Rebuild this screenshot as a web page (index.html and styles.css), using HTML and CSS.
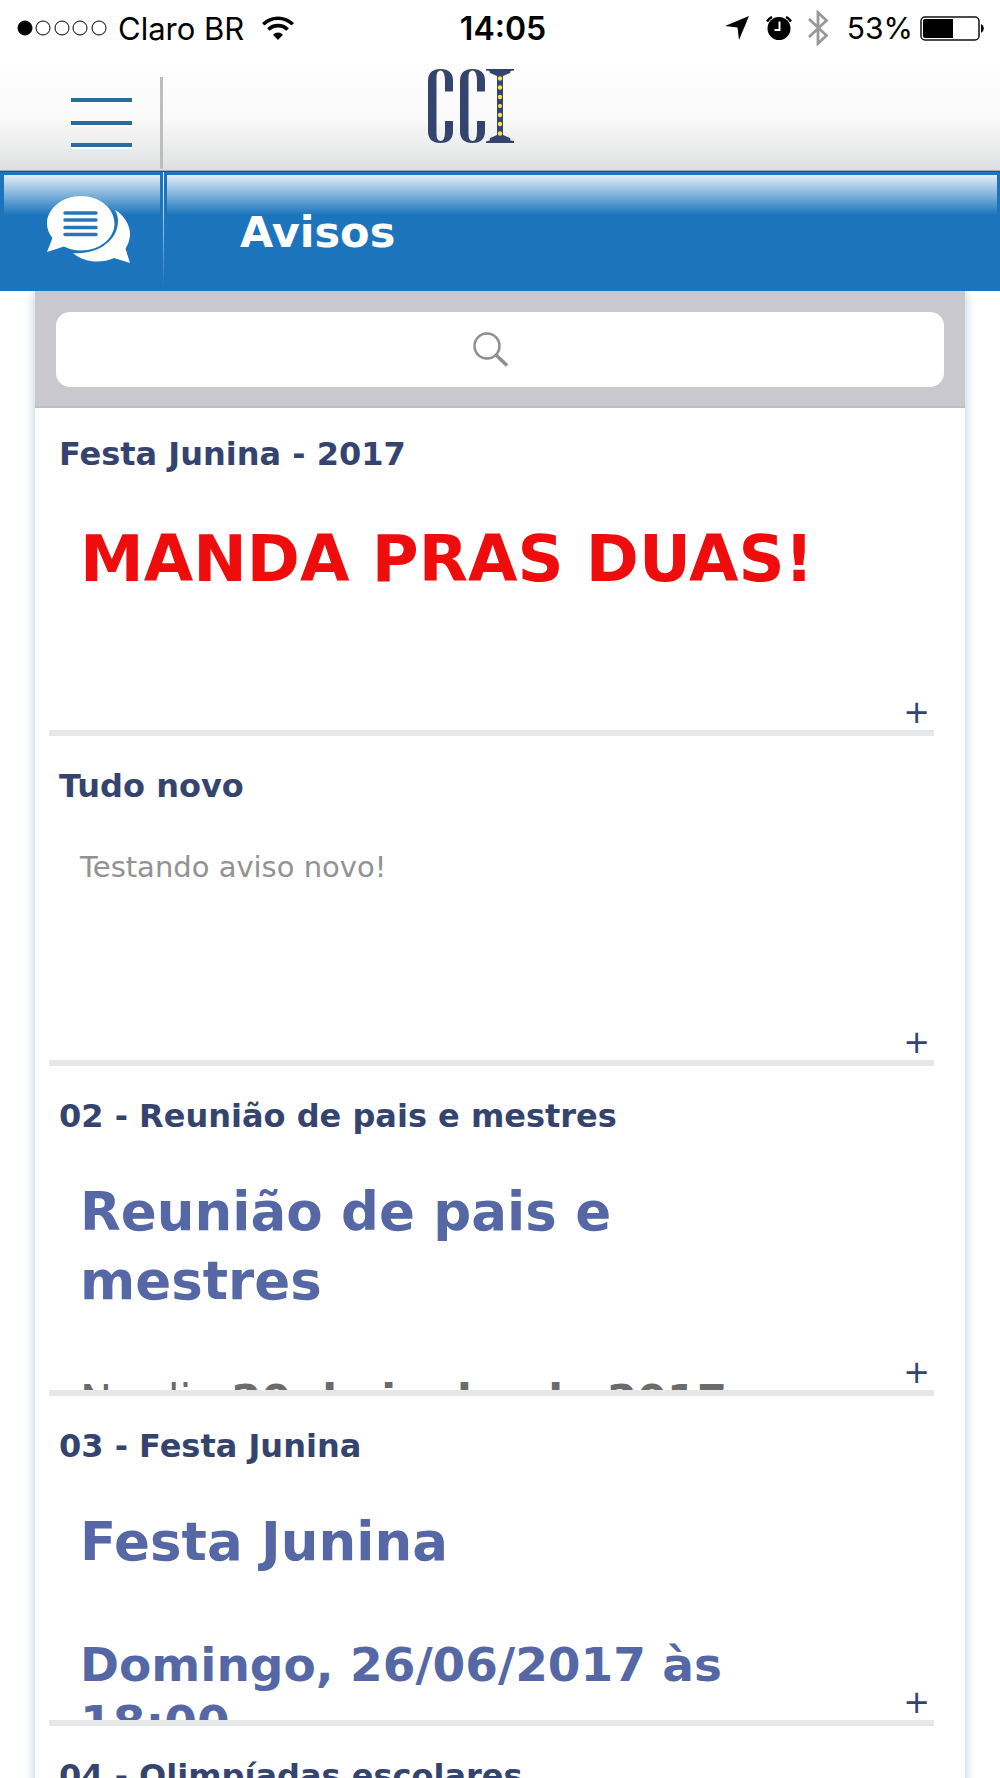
FILE: index.html
```html
<!DOCTYPE html>
<html lang="pt-BR">
<head>
    <meta charset="UTF-8">
    <meta name="viewport" content="width=device-width, initial-scale=1.0">
    <title>CCI - Avisos</title>
    <link rel="stylesheet" href="styles.css">
</head>
<body>
<div class="top">
    <div class="status">
        <div class="status-left">
            <svg width="90" height="16" viewBox="0 0 90 16" fill="none" stroke="#000">
                <circle cx="8" cy="8" r="7" fill="#000"/>
                <circle cx="26" cy="8" r="7"/>
                <circle cx="45" cy="8" r="7"/>
                <circle cx="63" cy="8" r="7"/>
                <circle cx="82" cy="8" r="7"/>
            </svg>
            <span class="carrier">Claro BR</span>
            <svg class="wifi" width="32" height="24" viewBox="0 0 32 24" fill="none" stroke="#000" stroke-width="3.6">
                <path d="M1.2 8.3a21 21 0 0 1 29.6 0"/>
                <path d="M6.4 13.6a13.6 13.6 0 0 1 19.2 0"/>
                <path d="M16 24l-5-5.300a7 7 0 0 1 10 0z" fill="#000" stroke="none"/>
            </svg>
        </div>
        <span class="clock">14:05</span>
        <div class="status-right">
            <svg width="24" height="24" viewBox="0 0 24 24"><path d="M24 0L14 24 12.500 11.500 0 10z"/></svg>
            <svg class="alarm" width="26" height="24" viewBox="0 0 26 24">
                <circle cx="13" cy="12.500" r="11.500"/>
                <path d="M1 5.500a13 13 0 0 1 5-4.500M25 5.500a13 13 0 0 0-5-4.500" fill="none" stroke="#000" stroke-width="2.500"/>
                <path d="M13.500 5.500v8.500H8.500" fill="none" stroke="#fff" stroke-width="2"/>
            </svg>
            <svg class="bluetooth" width="20" height="36" viewBox="0 0 20 36" fill="none" stroke="#999" stroke-width="2.800">
                <path d="M1 9l17.500 16.500-8.500 8V2.500l8.500 8L1 27"/>
            </svg>
            <span class="percent">53%</span>
            <svg width="65" height="25" viewBox="0 0 65 25">
                <rect x="1" y="1" width="58" height="23" rx="4" fill="#fff" stroke="#111" stroke-width="1.500"/>
                <path d="M5 3h28v19H5a2 2 0 0 1-2-2V5a2 2 0 0 1 2-2z"/>
                <path d="M61 8a5 5 0 0 1 0 9z"/>
            </svg>
        </div>
    </div>

    <header class="header">
        <button class="menu" type="button" aria-label="Menu">
            <svg width="62" height="52" viewBox="0 0 62 52">
                <path d="M0 5h61M0 28h61M0 51h61" stroke="#fff" stroke-width="3"/>
                <path d="M0 3h61M0 26h61M0 48h61" stroke="#276d9f" stroke-width="4"/>
            </svg>
        </button>
        <svg class="logo" width="88" height="76" viewBox="0 0 88 76" role="img" aria-label="CCI">
            <g fill="#35446f">
                <path id="logo-c" fill-rule="evenodd" d="M1 13Q1 1 13.500 1Q26 1 26 13V23.500H18V13Q18 2.500 13.500 2.500Q9.500 2.500 9.500 9V66Q9.500 73 13.500 73Q18 73 18 64V53H26V63Q26 75 13.500 75Q1 75 1 63Z"/>
                <use href="#logo-c" x="32"/>
                <path d="M59 1h28v1.500l-3.500.5-.5 2-7 3V67l7 3 .5 2.500 3.500.5v2H59v-1.500l3.500-1 .5-2.500 7-3V8l-7-3-.5-2L59 2.500z"/>
            </g>
            <g fill="#ffe04d">
                <circle cx="73" cy="10.500" r="2.200"/>
                <circle cx="73" cy="19.500" r="2.200"/>
                <circle cx="73" cy="29" r="2.200"/>
                <circle cx="73" cy="38" r="2"/>
                <circle cx="73" cy="47" r="2.200"/>
                <circle cx="73" cy="56" r="2.200"/>
                <circle cx="73" cy="65.500" r="2.200"/>
            </g>
        </svg>
    </header>
</div>

<div class="title-bar">
    <div class="title-icon">
        <svg width="84" height="68" viewBox="0 0 84 68">
            <path d="M68 14C77 19 83 29 83 38c0 5-1.500 10-4.500 14.500L83 67 67 62c-5 2.500-11 3.500-17 3.500-9 0-18-3-24-8.500 24 2 45-12 45-32 0-4-1-8-3-11z" fill="#fff"/>
            <path d="M34 0c18.500 0 33.500 12.500 33.500 27.500S52.500 54.500 34 54.500c-6 0-12-1.500-17-4L0 56l5.500-14C2 38 0 33 0 27.500 0 12.500 15.500 0 34 0z" fill="#fff"/>
            <path d="M18 17h31M18 24h31M18 31.500h31M18 38.500h31" stroke="#2877b8" stroke-width="3.500" stroke-linecap="round"/>
        </svg>
    </div>
    <div class="title-text">
        <h1>Avisos</h1>
    </div>
</div>

<main class="panel">
    <form class="search">
        <input type="search" aria-label="Buscar avisos">
        <svg class="search-icon" width="36" height="36" viewBox="0 0 36 36" fill="none" stroke="#8e8e93">
            <circle cx="14" cy="14" r="12.500" stroke-width="2.500"/>
            <path d="M23 23l11 10.500" stroke-width="3.500"/>
        </svg>
    </form>

    <section class="notice">
        <h2>Festa Junina - 2017</h2>
        <div class="notice-body">
            <p class="alert">MANDA PRAS DUAS!</p>
        </div>
        <button class="more" type="button" aria-label="Ver mais">+</button>
    </section>

    <section class="notice">
        <h2>Tudo novo</h2>
        <div class="notice-body">
            <p class="plain">Testando aviso novo!</p>
        </div>
        <button class="more" type="button" aria-label="Ver mais">+</button>
    </section>

    <section class="notice">
        <h2>02 - Reunião de pais e mestres</h2>
        <div class="notice-body">
            <h3>Reunião de pais e mestres</h3>
            <p class="detail">No dia <b>20 de junho de 2017</b></p>
        </div>
        <button class="more" type="button" aria-label="Ver mais">+</button>
    </section>

    <section class="notice">
        <h2>03 - Festa Junina</h2>
        <div class="notice-body">
            <h3>Festa Junina</h3>
            <h4>Domingo, 26/06/2017 às 18:00</h4>
        </div>
        <button class="more" type="button" aria-label="Ver mais">+</button>
    </section>

    <section class="notice">
        <h2>04 - Olimpíadas escolares</h2>
        <div class="notice-body"></div>
        <button class="more" type="button" aria-label="Ver mais">+</button>
    </section>
</main>
</body>
</html>
```

FILE: styles.css
```css
* {
    box-sizing: border-box;
}
html {
    height: 100%;
}
body {
    margin: 0;
    height: 100%;
    overflow: hidden;
    background: #fff;
    font-family: Verdana, "DejaVu Sans", sans-serif;
}
h1, h2, h3, h4, p {
    margin: 0;
}
svg {
    display: block;
}
button {
    padding: 0;
    border: none;
    background: none;
    cursor: pointer;
}

/* status bar + header */
.top {
    background: linear-gradient(#fff 35%, #f9f9f9 70%, #eaebeb 88%, #dcdee0);
    border-bottom: 1px solid #a5abb0;
}
.status {
    display: grid;
    grid-template-columns: 1fr auto 1fr;
    align-items: center;
    height: 56px;
    padding: 0 15px 0 17px;
    font-family: Inter, sans-serif;
    font-size: 31px;
    color: #000;
}
.status-left, .status-right {
    display: flex;
    align-items: center;
}
.carrier {
    margin-left: 11px;
}
.wifi {
    margin-left: 18px;
}
.clock {
    margin-left: 4px;
    font-size: 32px;
    font-weight: 600;
}
.status-right {
    justify-content: flex-end;
}
.alarm {
    margin-left: 17px;
}
.bluetooth {
    margin-left: 16px;
}
.percent {
    margin: 0 7px 0 19px;
    font-size: 30px;
}
.header {
    display: flex;
    height: 114px;
}
.menu {
    flex: none;
    width: 163px;
    height: 92px;
    margin-top: 21px;
    padding: 20px 0 0 71px;
    border-right: 3px solid #bbbdbf;
}
.menu svg {
    margin-bottom: 20px;
}
.logo {
    margin: 12px 0 0 264px;
}

/* blue bar */
.title-bar {
    display: flex;
    height: 120px;
    background: #1c75bc;
    border-top: 1px solid #10599a;
}
.title-icon, .title-text {
    background: linear-gradient(#e2eef8, #1c75bc) no-repeat;
}
.title-icon {
    flex: none;
    position: relative;
    width: 165px;
    padding: 24px 0 0 47px;
    background-position: 4px 3px;
    background-size: 156px 40px;
}
.title-icon::after {
    content: "";
    position: absolute;
    top: 0;
    right: 1px;
    width: 1px;
    height: 115px;
    background: linear-gradient(#fff, #1c75bc);
}
.title-text {
    flex: 1;
    margin: 0 3px 0 2px;
    padding: 34px 0 0 73px;
    background-position: 0 3px;
    background-size: 100% 40px;
}
h1 {
    font-size: 43px;
    line-height: 52px;
    color: #fff;
}

/* panel */
.panel {
    margin: 0 35px;
    background: #fff;
    box-shadow: 0 0 10px #b4c8d6;
    clip-path: inset(0 -12px);
}
.search {
    position: relative;
    padding: 21px 21px 19px;
    background: #c9c8ce;
    border-bottom: 2px solid #bfbfc2;
}
.search input {
    display: block;
    width: 100%;
    height: 75px;
    padding: 0 60px;
    border: none;
    border-radius: 14px;
    background: #fff;
    font-size: 28px;
    appearance: none;
}
.search-icon {
    position: absolute;
    top: 41px;
    left: 50%;
    margin-left: -27px;
    pointer-events: none;
}

/* notices */
.notice {
    position: relative;
    height: 330px;
    margin: 0 31px 0 14px;
    padding: 30px 0 0 10px;
    border-bottom: 6px solid #e6e7e8;
    overflow: hidden;
}
.search + .notice {
    height: 328px;
    padding-top: 26px;
}
h2 {
    font-size: 32px;
    line-height: 40px;
    color: #35446f;
}
.notice-body {
    height: 254px;
    padding: 41px 90px 0 21px;
    overflow: hidden;
}
.alert {
    margin-top: 8px;
    font-size: 64px;
    font-weight: bold;
    line-height: 72px;
    color: #ef0c0c;
}
.plain {
    font-size: 29px;
    line-height: 40px;
    color: #929292;
}
h3 {
    font-size: 53px;
    line-height: 69px;
    color: #5568a5;
}
.detail {
    margin-top: 56px;
    font-size: 43px;
    line-height: 58px;
    color: #6b6b6b;
}
h4 {
    margin-top: 60px;
    font-size: 47px;
    line-height: 58px;
    color: #5568a5;
}
.more {
    position: absolute;
    right: 4px;
    bottom: 0;
    font-family: inherit;
    font-size: 32px;
    line-height: 36px;
    color: #35446f;
}
```
